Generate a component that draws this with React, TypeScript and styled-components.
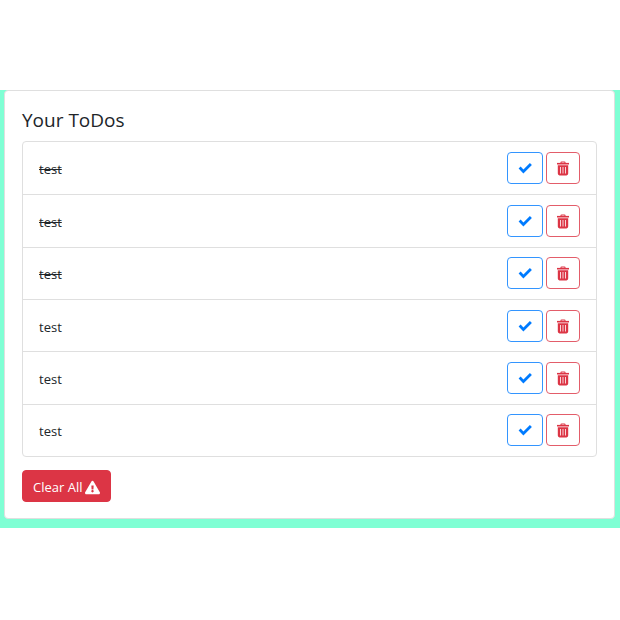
import React, { useState } from "react";
import styled, { createGlobalStyle } from "styled-components";
import { FaExclamationTriangle } from "react-icons/fa";

const GlobalStyle = createGlobalStyle`
  *, *::before, *::after { box-sizing: border-box; }
  body {
    margin: 0;
    background: #ffffff;
    color: #212529;
    font-family: "Segoe UI", "Open Sans", "Noto Sans", sans-serif;
    font-size: 13px;
    line-height: 20px;
  }
`;

const Page = styled.main`
  margin-top: 90px;
  padding: 0 5px 9px 4px;
  background: #7fffd4;
`;

const Card = styled.section`
  padding: 16px 17px;
  background: #ffffff;
  border: 1px solid #dfdfdf;
  border-radius: 4px;
`;

const Title = styled.h1`
  margin: 0 0 8px;
  font-size: 19px;
  font-weight: 400;
  line-height: 26px;
`;

const List = styled.ul`
  display: grid;
  grid-auto-rows: 1fr;
  min-height: 316px;
  margin: 0 0 13px;
  padding: 0;
  list-style: none;
  border: 1px solid #dfdfdf;
  border-radius: 4px;
`;

const Item = styled.li`
  display: flex;
  align-items: center;
  justify-content: space-between;
  padding: 0 16px;

  & + & {
    border-top: 1px solid #dfdfdf;
  }
`;

const Label = styled.span<{ $done: boolean }>`
  padding-top: 2px;
  text-decoration: ${({ $done }) => ($done ? "line-through" : "none")};
`;

const Actions = styled.div`
  display: flex;
  gap: 3px;
`;

const Button = styled.button`
  display: inline-flex;
  align-items: center;
  justify-content: center;
  height: 32px;
  padding: 0 10px;
  border: 1px solid #dc3545;
  border-radius: 4px;
  background: #dc3545;
  color: #ffffff;
  font: inherit;
  cursor: pointer;
`;

const IconButton = styled(Button)<{ $tone: "primary" | "danger" }>`
  width: ${({ $tone }) => ($tone === "primary" ? "36px" : "34px")};
  padding: 0;
  background: transparent;
  color: ${({ $tone }) => ($tone === "primary" ? "#007bff" : "#dc3545")};
  border-color: ${({ $tone }) => ($tone === "primary" ? "#3395ff" : "#e35d6a")};
`;

const ClearButton = styled(Button)`
  gap: 3px;
  padding: 2px 10px 0;
`;

const CheckIcon = () => (
  <svg width="14" height="14" viewBox="0 0 14 14" fill="none" aria-hidden="true">
    <path d="M1.6 6.6 5.4 10.4 12.9 2.9" stroke="currentColor" strokeWidth="2.8" />
  </svg>
);

const TrashIcon = () => (
  <svg width="14" height="16" viewBox="0 0 14 16" fill="none" aria-hidden="true">
    <path d="M5 3.2V2.6q0-.6.6-.6h2.8q.6 0 .6.6v.6" stroke="currentColor" strokeWidth="1.1" />
    <path d="M1 3.7h12" stroke="currentColor" strokeWidth="1.6" />
    <path
      fill="currentColor"
      fillRule="evenodd"
      d="M1.8 5.2h10.4v8.4Q12.2 15.4 10.5 15.4h-7Q1.8 15.4 1.8 13.6zM4 7v6.6h.8V7zm2.6 0v6.6h.8V7zm2.6 0v6.6h.8V7z"
    />
  </svg>
);

const initialTodos = [true, true, true, false, false, false].map((done, id) => ({
  id,
  text: "test",
  done,
}));

export default function App() {
  const [todos, setTodos] = useState(initialTodos);

  const toggle = (id: number) =>
    setTodos((items) => items.map((t) => (t.id === id ? { ...t, done: !t.done } : t)));
  const remove = (id: number) => setTodos((items) => items.filter((t) => t.id !== id));

  return (
    <>
      <GlobalStyle />
      <Page>
        <Card>
          <Title>Your ToDos</Title>
          <List>
            {todos.map((todo) => (
              <Item key={todo.id}>
                <Label $done={todo.done}>{todo.text}</Label>
                <Actions>
                  <IconButton $tone="primary" aria-label="Complete" onClick={() => toggle(todo.id)}>
                    <CheckIcon />
                  </IconButton>
                  <IconButton $tone="danger" aria-label="Delete" onClick={() => remove(todo.id)}>
                    <TrashIcon />
                  </IconButton>
                </Actions>
              </Item>
            ))}
          </List>
          <ClearButton onClick={() => setTodos([])}>
            Clear All <FaExclamationTriangle size={15} />
          </ClearButton>
        </Card>
      </Page>
    </>
  );
}
